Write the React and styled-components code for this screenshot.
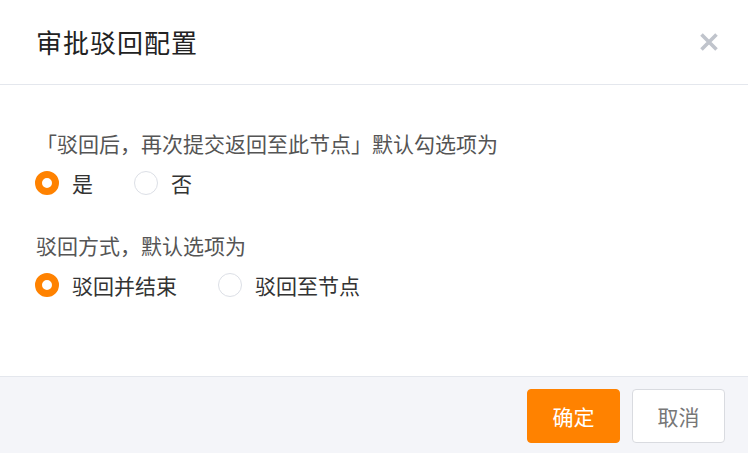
import { useState } from "react";
import styled, { createGlobalStyle } from "styled-components";

const GlobalStyle = createGlobalStyle`
  html, body {
    margin: 0;
    padding: 0;
    background: #fff;
  }
  body {
    font-family: "Noto Sans CJK SC", "Noto Sans", sans-serif;
  }
`;

const Dialog = styled.div`
  width: 748px;
  height: 453px;
  display: flex;
  flex-direction: column;
  background: #fff;
  box-sizing: border-box;
`;

const Header = styled.div`
  height: 84px;
  flex-shrink: 0;
  display: flex;
  align-items: center;
  justify-content: space-between;
  padding: 0 29px 0 36px;
  border-bottom: 1px solid #e4e7ed;
`;

const Title = styled.h2`
  margin: 0;
  font-size: 26px;
  font-weight: 400;
  letter-spacing: 1px;
  color: #222;
  line-height: 1;
`;

const CloseBtn = styled.button`
  border: none;
  background: none;
  padding: 0;
  width: 20px;
  height: 20px;
  display: flex;
  align-items: center;
  justify-content: center;
  cursor: pointer;
`;

const Body = styled.div`
  flex: 1;
  padding: 44px 36px 0 35px;
  display: flex;
  flex-direction: column;
`;

const Field = styled.div`
  display: flex;
  flex-direction: column;
  gap: 13px;
  margin-bottom: 36px;
`;

const Label = styled.div`
  font-size: 21px;
  line-height: 29px;
  color: #555;
  padding-left: 1px;
`;

// corner brackets kept at a full em
const Bracket = styled.span`
  display: inline-block;
  width: 1em;
  text-align: ${(p) => (p.$open ? "right" : "left")};
`;

const RadioGroup = styled.div`
  display: flex;
  align-items: center;
  gap: 41px;
`;

const Option = styled.label`
  display: flex;
  align-items: center;
  gap: 13px;
  font-size: 21px;
  line-height: 24px;
  color: #333;
  cursor: pointer;
`;

const Dot = styled.span`
  width: 24px;
  height: 24px;
  border-radius: 50%;
  box-sizing: border-box;
  background: #fff;
  border: ${(p) => (p.$checked ? "7px solid #ff8200" : "1px solid #dcdfe6")};
`;

const Footer = styled.div`
  height: 77px;
  flex-shrink: 0;
  box-sizing: border-box;
  border-top: 1px solid #e4e7ed;
  background: #f4f5f9;
  display: flex;
  justify-content: flex-end;
  align-items: flex-start;
  gap: 12px;
  padding: 12px 23px 0 0;
`;

const Button = styled.button`
  width: 93px;
  height: 54px;
  border-radius: 4px;
  font-family: inherit;
  font-size: 21px;
  cursor: pointer;
  box-sizing: border-box;
  border: 1px solid ${(p) => (p.$primary ? "#ff8200" : "#d9dbe0")};
  background: ${(p) => (p.$primary ? "#ff8200" : "#fff")};
  color: ${(p) => (p.$primary ? "#fff" : "#777")};
`;

const RadioRow = ({ options, value, onChange }) => (
  <RadioGroup>
    {options.map((o) => (
      <Option key={o} onClick={() => onChange(o)}>
        <Dot $checked={value === o} />
        {o}
      </Option>
    ))}
  </RadioGroup>
);

const App = () => {
  const [resubmit, setResubmit] = useState("是");
  const [mode, setMode] = useState("驳回并结束");

  return (
    <>
      <GlobalStyle />
      <Dialog lang="zh-CN">
        <Header>
          <Title>审批驳回配置</Title>
          <CloseBtn aria-label="关闭">
            <svg width="18" height="18" viewBox="0 0 18 18">
              <path
                d="M1.5 1.5 L16.5 16.5 M16.5 1.5 L1.5 16.5"
                stroke="#c0c4cc"
                strokeWidth="3.6"
              />
            </svg>
          </CloseBtn>
        </Header>
        <Body>
          <Field>
            <Label>
              <Bracket $open>「</Bracket>驳回后，再次提交返回至此节点
              <Bracket>」</Bracket>默认勾选项为
            </Label>
            <RadioRow
              options={["是", "否"]}
              value={resubmit}
              onChange={setResubmit}
            />
          </Field>
          <Field>
            <Label>驳回方式，默认选项为</Label>
            <RadioRow
              options={["驳回并结束", "驳回至节点"]}
              value={mode}
              onChange={setMode}
            />
          </Field>
        </Body>
        <Footer>
          <Button $primary>确定</Button>
          <Button>取消</Button>
        </Footer>
      </Dialog>
    </>
  );
};

export default App;
